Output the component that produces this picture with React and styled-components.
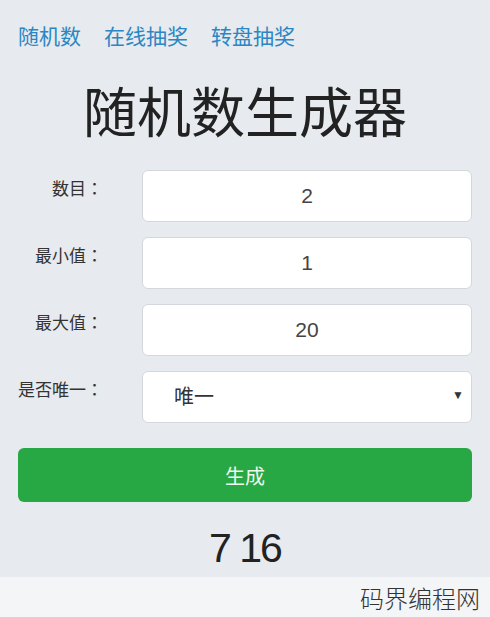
import React, { useState } from 'react';
import styled, { createGlobalStyle } from 'styled-components';

const GlobalStyle = createGlobalStyle`
  html, body {
    margin: 0;
    padding: 0;
    background: #e7eaee;
  }
  body {
    font-family: 'Liberation Sans', 'Noto Sans CJK SC', sans-serif;
    color: #222;
  }
`;

const Page = styled.div`
  width: 490px;
  height: 617px;
  display: flex;
  flex-direction: column;
  background: #e7eaee;
  overflow: hidden;
`;

const Main = styled.div`
  flex: 1;
  padding: 0 18px;
`;

const Nav = styled.nav`
  display: flex;
  gap: 23px;
  padding-top: 23px;
`;

const NavLink = styled.a`
  font-size: 21px;
  line-height: 28px;
  color: #2b87c3;
  text-decoration: none;
  cursor: pointer;
`;

const Title = styled.h1`
  margin: 30px 0 0;
  text-align: center;
  font-size: 54px;
  font-weight: 400;
  line-height: 66px;
  color: #222;
`;

const Form = styled.div`
  margin-top: 23px;
  display: flex;
  flex-direction: column;
  gap: 15px;
`;

const Row = styled.div`
  display: grid;
  grid-template-columns: 85px 1fr;
  column-gap: 39px;
  align-items: start;
`;

const Label = styled.label`
  text-align: right;
  font-family: 'Liberation Sans', 'Noto Sans CJK JP', sans-serif;
  font-size: 17px;
  line-height: 24px;
  padding-top: 8px;
  color: #333;
  white-space: nowrap;
`;

const Field = styled.input`
  box-sizing: border-box;
  width: 100%;
  height: 52px;
  border: 1px solid #d4d7db;
  border-radius: 6px;
  background: #fff;
  text-align: center;
  font-family: inherit;
  font-size: 21px;
  color: #444;
  outline: none;
`;

const SelectWrap = styled.div`
  position: relative;
`;

const Select = styled.select`
  box-sizing: border-box;
  width: 100%;
  height: 52px;
  border: 1px solid #d4d7db;
  border-radius: 6px;
  background: #fff;
  padding-left: 31px;
  font-family: inherit;
  font-size: 20px;
  color: #333;
  appearance: none;
  -webkit-appearance: none;
  outline: none;
`;

const Arrow = styled.span`
  position: absolute;
  right: 8px;
  top: 17px;
  font-size: 12px;
  color: #333;
  pointer-events: none;
`;

const Button = styled.button`
  margin-top: 25px;
  width: 100%;
  height: 54px;
  border: none;
  border-radius: 6px;
  background: #28a745;
  color: #eef8ee;
  font-family: inherit;
  font-size: 20px;
  cursor: pointer;
`;

const Result = styled.div`
  margin-top: 22px;
  text-align: center;
  font-size: 41px;
  line-height: 48px;
  letter-spacing: -2px;
  color: #222;
`;

const Footer = styled.div`
  height: 40px;
  background: #f4f5f7;
  display: flex;
  justify-content: flex-end;
  align-items: center;
  padding-right: 10px;
  font-size: 24px;
  font-weight: 300;
  color: #333;
`;

const App = () => {
  const [count, setCount] = useState('2');
  const [min, setMin] = useState('1');
  const [max, setMax] = useState('20');
  const [unique, setUnique] = useState('1');
  const [result, setResult] = useState('7 16');

  const generate = () => {
    const n = parseInt(count, 10) || 0;
    const lo = parseInt(min, 10) || 0;
    const hi = parseInt(max, 10) || 0;
    const out = [];
    while (out.length < n) {
      const v = lo + Math.floor(Math.random() * (hi - lo + 1));
      if (unique === '1' && out.includes(v) && out.length < hi - lo + 1) continue;
      out.push(v);
    }
    setResult(out.join(' '));
  };

  return (
    <Page>
      <GlobalStyle />
      <Main>
        <Nav>
          <NavLink>随机数</NavLink>
          <NavLink>在线抽奖</NavLink>
          <NavLink>转盘抽奖</NavLink>
        </Nav>
        <Title>随机数生成器</Title>
        <Form>
          <Row>
            <Label>数目：</Label>
            <Field value={count} onChange={e => setCount(e.target.value)} />
          </Row>
          <Row>
            <Label>最小值：</Label>
            <Field value={min} onChange={e => setMin(e.target.value)} />
          </Row>
          <Row>
            <Label>最大值：</Label>
            <Field value={max} onChange={e => setMax(e.target.value)} />
          </Row>
          <Row>
            <Label>是否唯一：</Label>
            <SelectWrap>
              <Select value={unique} onChange={e => setUnique(e.target.value)}>
                <option value="1">唯一</option>
                <option value="0">不唯一</option>
              </Select>
              <Arrow>▼</Arrow>
            </SelectWrap>
          </Row>
        </Form>
        <Button onClick={generate}>生成</Button>
        <Result>{result}</Result>
      </Main>
      <Footer>码界编程网</Footer>
    </Page>
  );
};

export default App;
